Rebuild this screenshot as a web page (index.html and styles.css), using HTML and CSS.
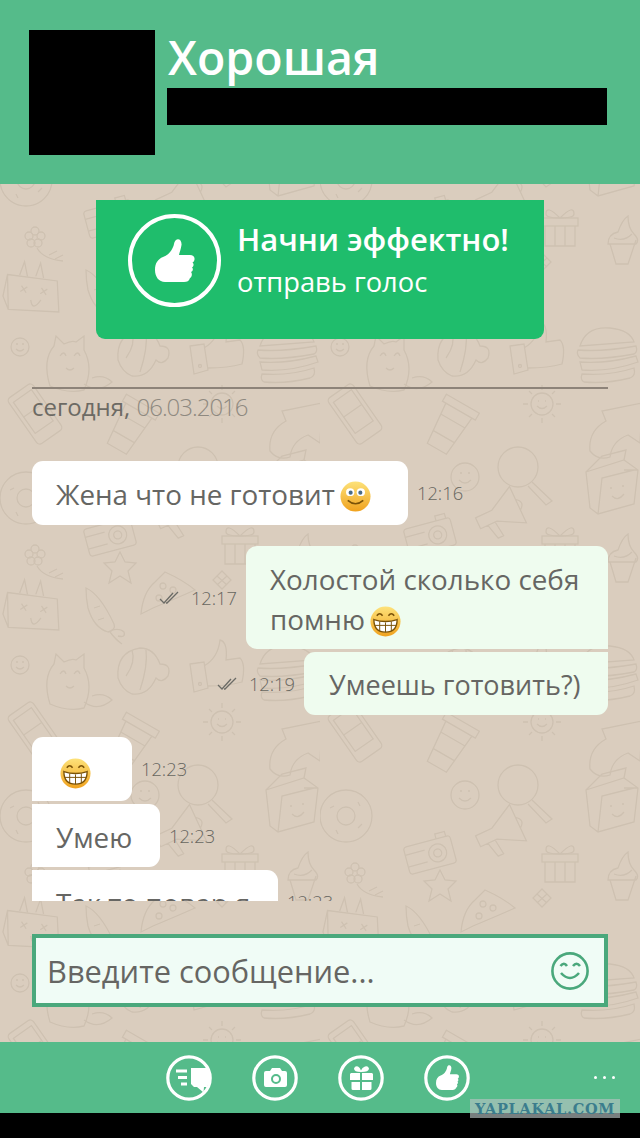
FILE: index.html
```html
<!DOCTYPE html>
<html lang="en">

<head>
    <meta charset="UTF-8">
    <meta name="viewport" content="width=device-width, initial-scale=1.0">
    <title>Чат</title>
    <link rel="stylesheet" href="styles.css">
</head>

<body>
    <!-- shared icons -->
    <svg class="icon-defs" width="0" height="0">
        <defs>
            <linearGradient id="faceGrad" x1="0" y1="0" x2="0" y2="1">
                <stop offset="0" stop-color="#fde27a" />
                <stop offset="1" stop-color="#f0a21e" />
            </linearGradient>
            <path id="thumbShape" d="M21 1C24-1 27 2 26.500 6 26 10 24.500 13 24 16L35 16C38 16 40 18 39.500 20.500 39.300 22 38.500 23 37.500 23.500 39 24.500 39 27.500 37 28.500 38.500 29.500 38 32.500 36 33 37.500 34.500 37 38 35 39 34 42 32 43 29 43L10 43C4 43 0 38 0 31 0 24 3 20 8 18 14 16 18 10 19 5 19.300 3 20 2 21 1Z" />
        </defs>
        <symbol id="grin" viewBox="0 0 32 32">
            <circle cx="16" cy="16" r="15.500" fill="url(#faceGrad)" />
            <path d="M4 14Q16 18 28 14 28 27 16 27 4 27 4 14Z" fill="#fff" stroke="#7a5208" stroke-width="1.400" />
            <path d="M10 16V26M16 17V27M22 16V26M5 20H27" stroke="#7a5208" stroke-width="1" fill="none" />
            <path d="M7 10Q10 6 13 10M19 10Q22 6 25 10" stroke="#7a5208" stroke-width="1.600" fill="none" />
        </symbol>
        <symbol id="smile" viewBox="0 0 32 32">
            <circle cx="16" cy="16" r="15.500" fill="url(#faceGrad)" />
            <ellipse cx="10.500" cy="11.500" rx="4.300" ry="4" fill="#fff" />
            <ellipse cx="21.500" cy="11.500" rx="4.300" ry="4" fill="#fff" />
            <circle cx="11" cy="12" r="2.100" fill="#4a6a86" />
            <circle cx="21" cy="12" r="2.100" fill="#4a6a86" />
            <path d="M8 20Q16 27 24 20" stroke="#7a5208" stroke-width="1.700" fill="none" />
        </symbol>
        <symbol id="checks" viewBox="0 0 20 14">
            <path d="M1 8L5 12 14 2M7 12L8 12 19 1" fill="none" stroke="#6b6b66" stroke-width="1.300" />
        </symbol>
    </svg>

    <header class="top-bar">
        <div class="avatar"></div>
        <div class="top-info">
            <div class="top-name">Хорошая</div>
            <div class="top-status"></div>
        </div>
    </header>

    <main class="chat">
        <svg class="wallpaper" width="100%" height="100%">
            <defs>
                <g id="tile" class="doodle" transform="translate(0,-520)">
                    <!-- flower -->
                    <g transform="translate(35,555)">
                        <circle cx="0" cy="-6" r="4" /><circle cx="6" cy="-1" r="4" /><circle cx="3" cy="6" r="4" /><circle cx="-4" cy="6" r="4" /><circle cx="-6" cy="-1" r="4" />
                        <path d="M2 11Q8 22 28 24M14 18L22 14M20 22L28 18" />
                    </g>
                    <!-- camera -->
                    <g transform="translate(110,855) rotate(-15)">
                        <rect x="-24" y="-14" width="48" height="28" rx="3" /><circle cx="8" cy="0" r="9" /><circle cx="8" cy="0" r="4" /><path d="M-24-6H-4M-24 6H-4M10-14V-19H20V-14" />
                    </g>
                    <!-- star -->
                    <polygon transform="translate(120,568)" points="0,-16 5,-6 16,-5 8,3 11,15 0,8 -11,15 -8,3 -16,-5 -5,-6" />
                    <!-- pizza -->
                    <g transform="translate(167,592)">
                        <path d="M-26 22Q-24 0-12-10L-2-20Q16-12 28-2 10 6-14 16-22 20-26 22Z" /><circle cx="-4" cy="-6" r="3" /><circle cx="6" cy="-2" r="3" /><circle cx="-8" cy="6" r="3" />
                    </g>
                    <!-- diamond -->
                    <g transform="translate(222,580)">
                        <path d="M0-9L9 0 0 9-9 0ZM-5-4L5 5M5-4L-5 5" />
                    </g>
                    <!-- gift -->
                    <g transform="translate(240,540)">
                        <rect x="-18" y="-4" width="36" height="8" /><path d="M-15 4V24H15V4M-5 4V24M5 4V24M0-4Q-14-18-14-8-14-4 0-4Q14-18 14-8 14-4 0-4" />
                    </g>
                    <!-- cupcake -->
                    <g transform="translate(302,558)">
                        <path d="M-12 4L-6 24H6L14 0M-14 4Q-14-6-4-8 0-20 6-24 6-12 12-6 18 0 14 4Z" /><path d="M-8-2Q2 2 10-6" />
                    </g>
                    <!-- rabbit box -->
                    <g transform="translate(32,612) rotate(12)">
                        <path d="M-28-14L22-18 30 12-20 20ZM-28-14L-28 8-20 20" /><path d="M-16-16L-14-30-8-16M0-18L2-32 8-18" />
                        <path d="M-12-6L-6 0M-6-6L-12 0M8-8L14-2M14-8L8-2" /><path d="M0 6Q4 18 10 4" />
                    </g>
                    <!-- carrot -->
                    <g transform="translate(102,618)">
                        <path d="M-16-30Q-2-24 12 6 14 12 6 14-8 10-14-10-16-20-16-30Z" /><path d="M8 14Q14 22 20 26M10 12Q18 10 22 14 24 20 16 18M-8-10L-2-12M-4 2L2 0" />
                    </g>
                    <!-- cat -->
                    <g transform="translate(68,682)">
                        <path d="M-18 22Q-26-4-14-18L-12-28-4-20Q4-24 8-22L16-28 16-14Q26 4 16 26 0 30-18 22Z" /><path d="M-8-8Q-4-14-2-8M6-8Q10-14 12-8M-2 4Q2 8 6 4M16 20Q30 30 44 18 36 10 24 14" />
                    </g>
                    <!-- croissant -->
                    <g transform="translate(140,670)">
                        <path d="M-22 8Q-24-18 0-22 14-22 20 -6 32-6 28 6 22 14 16 8 8 26-8 24-18 20-22 8Z" /><path d="M-8-20Q-4-8-14 6M6-20Q8-4 0 20" />
                    </g>
                    <!-- thumb -->
                    <g transform="translate(214,672)">
                        <path d="M-24-8L-10-10-6 16-20 20ZM-10-6Q4-14 6-32 14-30 12-12L26-14Q32-8 28 10 14 14-6 14" />
                        <circle cx="-14" cy="12" r="1.500" />
                    </g>
                    <!-- burger -->
                    <g transform="translate(286,672)">
                        <path d="M-26-8Q-20-28 4-26 24-24 28-12ZM-28-4Q-4-2 30-8 32-2 28 0-4 6-26 4-30 0-28-4ZM-26 8Q0 10 30 2L32 8Q4 18-24 16ZM-24 20Q4 22 28 14 30 22 24 24 0 30-22 28-26 26-24 20Z" />
                    </g>
                    <!-- small smile -->
                    <g transform="translate(20,665)">
                        <circle cx="0" cy="0" r="9" /><path d="M-4 2Q0 6 4 2M-4-3H-2M2-3H4" />
                    </g>
                    <!-- phone -->
                    <g transform="translate(35,732) rotate(-35)">
                        <rect x="-15" y="-28" width="30" height="56" rx="4" /><rect x="-11" y="-22" width="22" height="38" /><path d="M-11-4H11" />
                    </g>
                    <!-- coffee -->
                    <g transform="translate(130,742) rotate(30)">
                        <path d="M-14-16L-10 28H12L16-16ZM-18-24H20V-16H-18ZM-13-4L15-4M-11 14L13 14" />
                    </g>
                    <!-- sun -->
                    <g transform="translate(222,722)">
                        <circle cx="0" cy="0" r="11" /><path d="M-5 2Q0 7 5 2M-4-3H-3M3-3H4M0-19V-14M0 14V19M-19 0H-14M14 0H19M-13-13L-10-10M10 10L13 13M13-13L10-10M-10 10L-13 13" />
                    </g>
                    <!-- arrow -->
                    <g transform="translate(298,745)">
                        <path d="M-28 24Q-30 4-12-6L-16-16 24-24 22 16 10 8Q-6 14-8 30-20 34-28 24Z" />
                    </g>
                    <!-- smile -->
                    <g transform="translate(145,795)">
                        <circle cx="0" cy="0" r="14" /><path d="M-6 3Q0 9 6 3M-5-4H-3M3-4H5" />
                    </g>
                    <!-- magnifier -->
                    <g transform="translate(198,785)">
                        <circle cx="0" cy="0" r="20" /><path d="M14 15L34 34 28 38 10 19" />
                    </g>
                    <!-- milk -->
                    <g transform="translate(290,802)">
                        <path d="M-24-12L14-24 28-14 24 20-12 30-20 24ZM14-24L16-34-8-28-24-12M14-14L28-14M-12 30L-8-6 24-14" /><path d="M2 12Q8 18 14 10M0 4H2M12 2H14" />
                    </g>
                    <!-- donut -->
                    <g transform="translate(26,816)">
                        <circle cx="0" cy="0" r="26" /><circle cx="0" cy="0" r="9" /><path d="M-16-8L-12-10M12-14L14-10M16 8L12 12M-10 14L-8 18" />
                    </g>
                    <!-- megaphone -->
                    <g transform="translate(178,832) rotate(-25)">
                        <path d="M-22-6L-4-6 22-20 22 20-4 6-22 6ZM-14 6L-10 22H-4L-6 6M22-6Q30 0 22 6" />
                    </g>
                </g>
            </defs>
            <pattern id="wallTile" patternUnits="userSpaceOnUse" x="0" y="18" width="320" height="318">
                <use href="#tile" />
                <use href="#tile" y="318" />
                <use href="#tile" y="-318" />
            </pattern>
            <rect width="100%" height="100%" fill="url(#wallTile)" />
        </svg>

        <section class="promo">
            <span class="promo-ring">
                <svg class="promo-thumb" viewBox="0 0 40 44"><use href="#thumbShape" /></svg>
            </span>
            <div class="promo-text">
                <div class="promo-title">Начни эффектно!</div>
                <div class="promo-sub">отправь голос</div>
            </div>
        </section>

        <div class="day">
            <span class="day-name">сегодня,</span> <span class="day-date">06.03.2016</span>
        </div>

        <div class="messages">
            <div class="row in first">
                <div class="bubble b-wife">Жена что не готовит<svg class="emoji"><use href="#smile" /></svg></div>
                <span class="time">12:16</span>
            </div>
            <div class="row out">
                <svg class="checks"><use href="#checks" /></svg>
                <span class="time">12:17</span>
                <div class="bubble b-single group-top">Холостой сколько себя помню<svg class="emoji"><use href="#grin" /></svg></div>
            </div>
            <div class="row out tight">
                <svg class="checks"><use href="#checks" /></svg>
                <span class="time">12:19</span>
                <div class="bubble b-cooking group-bottom">Умеешь готовить?)</div>
            </div>
            <div class="row in gap">
                <div class="bubble b-grin group-top"><svg class="emoji"><use href="#grin" /></svg></div>
                <span class="time">12:23</span>
            </div>
            <div class="row in tight">
                <div class="bubble b-can group-mid">Умею</div>
                <span class="time">12:23</span>
            </div>
            <div class="row in tight">
                <div class="bubble group-mid b-cook">Так то повар я</div>
                <span class="time">12:23</span>
            </div>
        </div>

        <div class="composer">
            <span class="composer-hint">Введите сообщение...</span>
            <svg class="composer-smile" viewBox="0 0 40 40">
                <circle cx="20" cy="20" r="17.600" />
                <path d="M11 22Q20 32 29 22M10.500 15Q14 10.500 17 15M23 15Q26.500 10.500 30 15" />
            </svg>
        </div>
    </main>

    <footer class="bottom-bar">
        <div class="actions">
            <svg class="action" viewBox="0 0 46 46">
                <circle class="ring" cx="23" cy="23" r="21.200" />
                <path class="solid" d="M25 13H41.500A20 20 0 0 1 41 32H38L37.500 37.500 31 32H28L25 29Z" />
                <path class="solid" d="M10 14.500H21V17.500H10ZM12 21H21V24H12ZM15 27.500H21V30.500H15Z" />
            </svg>
            <svg class="action" viewBox="0 0 46 46">
                <circle class="ring" cx="23" cy="23" r="21.200" />
                <path class="solid" fill-rule="evenodd" d="M14 16H18L20 13H28L30 16H33Q35 16 35 18V30Q35 32 33 32H14Q12 32 12 30V18Q12 16 14 16ZM24 19A5 5 0 1 0 24 29 5 5 0 1 0 24 19ZM24 21A3 3 0 1 1 24 27 3 3 0 1 1 24 21Z" />
            </svg>
            <svg class="action" viewBox="0 0 46 46">
                <circle class="ring" cx="23" cy="23" r="21.200" />
                <path class="solid" d="M13 18H22V25H12V19ZM24 18H34L35 19V25H24ZM13.500 27H22V35H15Q13.500 35 13.500 33.500ZM24 27H33.500V33.500Q33.500 35 32 35H24ZM23 17Q16 17 16 13.500 17 10.500 20 11.500 22 12.500 23 15.500 24 12.500 27 11.500 30 10.500 31 13.500 31 17 23 17Z" />
            </svg>
            <svg class="action" viewBox="0 0 46 46">
                <circle class="ring" cx="23" cy="23" r="21.200" />
                <use class="solid" href="#thumbShape" transform="translate(12,10) scale(.58)" />
            </svg>
        </div>
        <div class="more"><i></i><i></i><i></i></div>
    </footer>
    <div class="screen-end"></div>
    <div class="watermark">YAPLAKAL.COM</div>
</body>

</html>
```

FILE: styles.css
```css
body {
    margin: 0;
    width: 640px;
    height: 1138px;
    overflow: hidden;
    position: relative;
    display: flex;
    flex-direction: column;
    font-family: "Open Sans", "Noto Sans", sans-serif;
    background-color: #dacdbe;
    color: #666663;
}

.icon-defs {
    position: absolute;
}

/* header */
.top-bar {
    height: 184px;
    box-sizing: border-box;
    flex: none;
    display: flex;
    padding: 30px 33px 0 29px;
    background-color: #55bb8a;
}

.avatar {
    width: 126px;
    height: 125px;
    background-color: #000;
}

.top-info {
    flex: 1;
    margin-left: 12px;
}

.top-name {
    height: 58px;
    padding-left: 1px;
    font-size: 46.500px;
    line-height: 55px;
    font-weight: 600;
    color: #fff;
}

.top-status {
    height: 37px;
    background-color: #000;
}

/* chat area */
.chat {
    position: relative;
    flex: 1;
    display: flex;
    flex-direction: column;
    padding: 16px 32px 0;
}

.wallpaper {
    position: absolute;
    top: 0;
    left: 0;
}

.doodle {
    fill: none;
    stroke: #cec1b1;
    stroke-width: 1.300;
}

.promo,
.day,
.messages,
.composer {
    position: relative;
}

.promo {
    width: 448px;
    height: 139px;
    box-sizing: border-box;
    margin-left: 64px;
    padding: 14px 0 0 32px;
    display: flex;
    background-color: #1fbd6c;
    border-radius: 0 0 9px 9px;
    color: #fff;
}

.promo-ring {
    width: 93px;
    height: 93px;
    box-sizing: border-box;
    border: 4px solid #fff;
    border-radius: 50%;
    display: flex;
    align-items: center;
    justify-content: center;
}

.promo-thumb {
    width: 40px;
    height: 44px;
    fill: #fff;
}

.promo-text {
    margin-left: 16px;
}

.promo-title {
    margin-top: 5px;
    font-size: 31px;
    line-height: 40px;
    font-weight: 600;
}

.promo-sub {
    margin-top: 3px;
    font-size: 27.300px;
    line-height: 40px;
}

.day {
    margin-top: 48px;
    height: 74px;
    box-sizing: border-box;
    border-top: 2px solid #8d8379;
    font-size: 24px;
    line-height: 36px;
}

.day-name {
    color: #6c6a64;
}

.day-date {
    color: #8e8980;
    font-weight: 300;
    letter-spacing: -1px;
}

.messages {
    height: 440px;
    flex: none;
    overflow: hidden;
    font-size: 27.800px;
    line-height: 40px;
}

.row {
    display: flex;
    align-items: center;
    margin-top: 21px;
}

.row.first {
    margin-top: 0;
}

.row.gap {
    margin-top: 22px;
}

.row.tight {
    margin-top: 3px;
}

.row.out {
    justify-content: flex-end;
}

.bubble {
    box-sizing: border-box;
    height: 63px;
    padding: 13px 24px;
    border-radius: 11px;
    background-color: #fff;
}

.out .bubble {
    background-color: #effcef;
}

.b-wife {
    width: 376px;
    height: 64px;
}

.b-single {
    width: 362px;
    height: 103px;
}

.b-cooking {
    width: 304px;
    padding-left: 25px;
    padding-right: 0;
    font-size: 27px;
    white-space: nowrap;
}

.b-grin {
    width: 100px;
    height: 64px;
    padding-left: 28px;
}

.b-can {
    width: 128px;
}

.b-cook {
    width: 246px;
}

.in .group-top {
    border-bottom-left-radius: 0;
}

.in .group-mid {
    border-top-left-radius: 0;
    border-bottom-left-radius: 0;
}

.out .group-top {
    border-bottom-right-radius: 0;
}

.out .group-bottom {
    border-top-right-radius: 0;
}

.emoji {
    width: 31px;
    height: 31px;
    margin-left: 5px;
    vertical-align: -7px;
}

.b-grin .emoji {
    margin-left: 0;
    vertical-align: -8px;
}

.time {
    font-size: 18.300px;
    line-height: 24px;
    font-weight: 300;
    color: #67665f;
}

.in .time {
    margin-left: 9px;
}

.out .time {
    margin-right: 9px;
}

.checks {
    width: 20px;
    height: 14px;
    margin-right: 12px;
}

.composer {
    height: 73px;
    box-sizing: border-box;
    margin-top: 33px;
    padding: 0 14px 0 11px;
    display: flex;
    align-items: center;
    justify-content: space-between;
    border: 4px solid #4aa87c;
    background-color: #f0fcf6;
}

.composer-hint {
    font-size: 30.800px;
    line-height: 44px;
}

.composer-smile {
    width: 40px;
    height: 40px;
    fill: none;
    stroke: #4aa87c;
    stroke-width: 2.600;
}

/* bottom app bar */
.bottom-bar {
    height: 71px;
    flex: none;
    position: relative;
    display: flex;
    align-items: center;
    background-color: #55bb8a;
}

.actions {
    display: flex;
    gap: 40px;
    margin-left: 166px;
}

.action {
    width: 46px;
    height: 46px;
    display: block;
}

.ring {
    fill: none;
    stroke: #fff;
    stroke-width: 3.200;
}

.solid {
    fill: #fff;
}

.more {
    display: flex;
    gap: 6px;
    margin-left: 124px;
}

.more i {
    width: 3px;
    height: 3px;
    border-radius: 50%;
    background-color: #fff;
}

.screen-end {
    height: 25px;
    flex: none;
    background-color: #000;
}

.watermark {
    position: absolute;
    left: 470px;
    top: 1099px;
    width: 150px;
    height: 19px;
    background-color: rgba(185, 195, 195, 0.65);
    color: #3b7d8d;
    font-family: "DejaVu Serif", serif;
    font-weight: bold;
    font-size: 14.500px;
    line-height: 19px;
    letter-spacing: 0.7px;
    text-align: center;
    white-space: nowrap;
}
```
